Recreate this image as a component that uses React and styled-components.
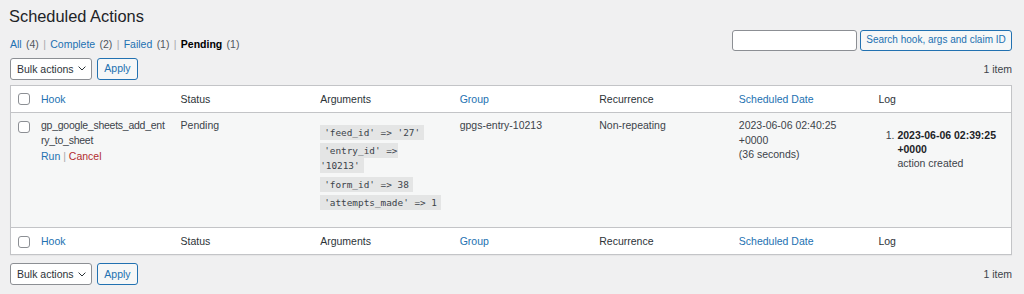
import React from "react";
import styled, { createGlobalStyle } from "styled-components";

const GlobalStyle = createGlobalStyle`
  * { box-sizing: border-box; }
  body {
    margin: 0;
    background: #f0f0f1;
    font-family: "Liberation Sans", Arial, sans-serif;
    font-size: 10.5px;
    line-height: 14.3px;
    color: #3c434a;
  }
`;

const blue = "#2271b1";

const Page = styled.div`
  padding: 0 12px 0 10px;
`;

const Title = styled.h1`
  margin: 0 0 0 -1px;
  padding-top: 4.5px;
  font-size: 16.4px;
  line-height: 22px;
  font-weight: 400;
  color: #1d2327;
`;

const TopRow = styled.div`
  display: flex;
  justify-content: space-between;
  align-items: flex-start;
`;

const Filters = styled.div`
  margin-top: 10.5px;
  line-height: 14.7px;
  word-spacing: 1.4px;
  color: #a7aaad;
`;

const FilterLink = styled.a`
  color: ${(p) => (p.$current ? "#000" : blue)};
  font-weight: ${(p) => (p.$current ? 700 : 400)};
  text-decoration: none;
`;

const Count = styled.span`
  color: #50575e;
  font-weight: 400;
`;

const SearchBox = styled.div`
  display: flex;
  gap: 3.5px;
  margin-top: 3px;
`;

const SearchInput = styled.input`
  width: 125px;
  height: 21px;
  margin: 0;
  border: 1px solid #8c8f94;
  border-radius: 3px;
  background: #fff;
`;

const Button = styled.button`
  height: ${(p) => (p.$small ? 21 : 22)}px;
  width: ${(p) => p.$w}px;
  padding: 0;
  margin: 0;
  border: 1px solid ${blue};
  border-radius: 3px;
  background: #f6f7f7;
  color: ${blue};
  font-family: inherit;
  font-size: ${(p) => (p.$small ? 10 : 10.5)}px;
  line-height: 1;
`;

const TableNav = styled.div`
  display: flex;
  justify-content: space-between;
  align-items: center;
  height: 22px;
  margin-top: ${(p) => p.$top}px;
`;

const Actions = styled.div`
  display: flex;
  gap: 5px;
`;

const SelectBox = styled.div`
  width: 82px;
  height: 22px;
  display: flex;
  align-items: center;
  justify-content: space-between;
  padding: 0 5px 0 6px;
  border: 1px solid #8c8f94;
  border-radius: 3px;
  background: #fff;
  color: #2c3338;
`;

const Chevron = () => (
  <svg width="8" height="5" viewBox="0 0 8 5">
    <polyline points="0.6,0.6 4,4 7.4,0.6" fill="none" stroke="#2c3338" strokeWidth="1" />
  </svg>
);

const ItemCount = styled.span`
  color: #3c434a;
`;

const Table = styled.table`
  width: 100%;
  table-layout: fixed;
  border-spacing: 0;
  border: 1px solid #c3c4c7;
  background: #fff;
  margin-top: 5px;
  box-shadow: 0 1px 1px rgba(0, 0, 0, 0.04);
`;

const Th = styled.th`
  text-align: left;
  font-weight: 400;
  padding: 6px 7px 5px;
  line-height: 15px;
  color: #2c3338;
  vertical-align: top;
  border-bottom: ${(p) => (p.$foot ? "none" : "1px solid #c3c4c7")};
  border-top: ${(p) => (p.$foot ? "1px solid #c3c4c7" : "none")};
`;

const CheckTh = styled(Th)`
  width: 23px;
  padding: ${(p) => (p.$foot ? "8px" : "7.5px")} 4px 0 7px;
`;

const SortLink = styled.a`
  color: ${blue};
  text-decoration: none;
`;

const Row = styled.tr`
  background: #f6f7f7;
`;

const Td = styled.td`
  padding: 5.5px 7px;
  vertical-align: top;
`;

const CheckTd = styled(Td)`
  padding: 8px 4px 0 7px;
`;

const Check = styled.input.attrs({ type: "checkbox" })`
  appearance: none;
  display: block;
  width: 12px;
  height: 12px;
  margin: 0;
  border: 1px solid #8c8f94;
  border-radius: 3px;
  background: #fff;
`;

const HookName = styled.div`
  word-break: break-all;
  letter-spacing: -0.25px;
`;

const RowActions = styled.div`
  padding-top: 2px;
  color: #a7aaad;
`;

const ActionLink = styled.a`
  color: ${(p) => (p.$danger ? "#b32d2e" : blue)};
  text-decoration: none;
`;

const ArgList = styled.ul`
  list-style: none;
  margin: 7px 0 10.5px;
  padding: 0;

  li {
    line-height: 15px;
    margin-bottom: 3.5px;
  }
  li:last-child {
    margin-bottom: 0;
  }
`;

const Code = styled.code`
  font-family: "DejaVu Sans Mono", "Liberation Mono", monospace;
  font-size: 9.4px;
  padding: 2.4px 4px 1.6px;
  background: rgba(0, 0, 0, 0.07);
  color: #3c434a;
`;

const LogList = styled.ol`
  margin: 9.6px 0 0;
  padding-left: 19px;

  strong {
    font-weight: 700;
    color: #1d2327;
  }
`;

const columns = [
  { label: "Hook", sortable: true },
  { label: "Status" },
  { label: "Arguments" },
  { label: "Group", sortable: true },
  { label: "Recurrence" },
  { label: "Scheduled Date", sortable: true },
  { label: "Log" },
];

const args = [
  "'feed_id' => '27'",
  "'entry_id' => '10213'",
  "'form_id' => 38",
  "'attempts_made' => 1",
];

const HeadRow = ({ foot }) => (
  <tr>
    <CheckTh $foot={foot}>
      <Check />
    </CheckTh>
    {columns.map((c) => (
      <Th key={c.label} $foot={foot}>
        {c.sortable ? <SortLink href="#">{c.label}</SortLink> : c.label}
      </Th>
    ))}
  </tr>
);

const Nav = ({ top }) => (
  <TableNav $top={top}>
    <Actions>
      <SelectBox>
        <span>Bulk actions</span>
        <Chevron />
      </SelectBox>
      <Button $w={41}>Apply</Button>
    </Actions>
    <ItemCount>1 item</ItemCount>
  </TableNav>
);

export default function App() {
  return (
    <>
      <GlobalStyle />
      <Page>
        <Title>Scheduled Actions</Title>
        <TopRow>
          <Filters>
            <FilterLink href="#">All <Count>(4)</Count></FilterLink> |{" "}
            <FilterLink href="#">Complete <Count>(2)</Count></FilterLink> |{" "}
            <FilterLink href="#">Failed <Count>(1)</Count></FilterLink> |{" "}
            <FilterLink $current>Pending <Count>(1)</Count></FilterLink>
          </Filters>
          <SearchBox>
            <SearchInput />
            <Button $small $w={152}>Search hook, args and claim ID</Button>
          </SearchBox>
        </TopRow>

        <Nav top={6} />

        <Table>
          <thead>
            <HeadRow />
          </thead>
          <tbody>
            <Row>
              <CheckTd>
                <Check />
              </CheckTd>
              <Td>
                <HookName>gp_google_sheets_add_entry_to_sheet</HookName>
                <RowActions>
                  <ActionLink href="#">Run</ActionLink> |{" "}
                  <ActionLink href="#" $danger>Cancel</ActionLink>
                </RowActions>
              </Td>
              <Td>Pending</Td>
              <Td>
                <ArgList>
                  {args.map((a) => (
                    <li key={a}>
                      <Code>{a}</Code>
                    </li>
                  ))}
                </ArgList>
              </Td>
              <Td>gpgs-entry-10213</Td>
              <Td>Non-repeating</Td>
              <Td>
                2023-06-06 02:40:25 +0000
                <br />
                (36 seconds)
              </Td>
              <Td>
                <LogList>
                  <li>
                    <strong>2023-06-06 02:39:25 +0000</strong>
                    <br />
                    action created
                  </li>
                </LogList>
              </Td>
            </Row>
          </tbody>
          <tfoot>
            <HeadRow foot />
          </tfoot>
        </Table>

        <Nav top={8.5} />
      </Page>
    </>
  );
}
